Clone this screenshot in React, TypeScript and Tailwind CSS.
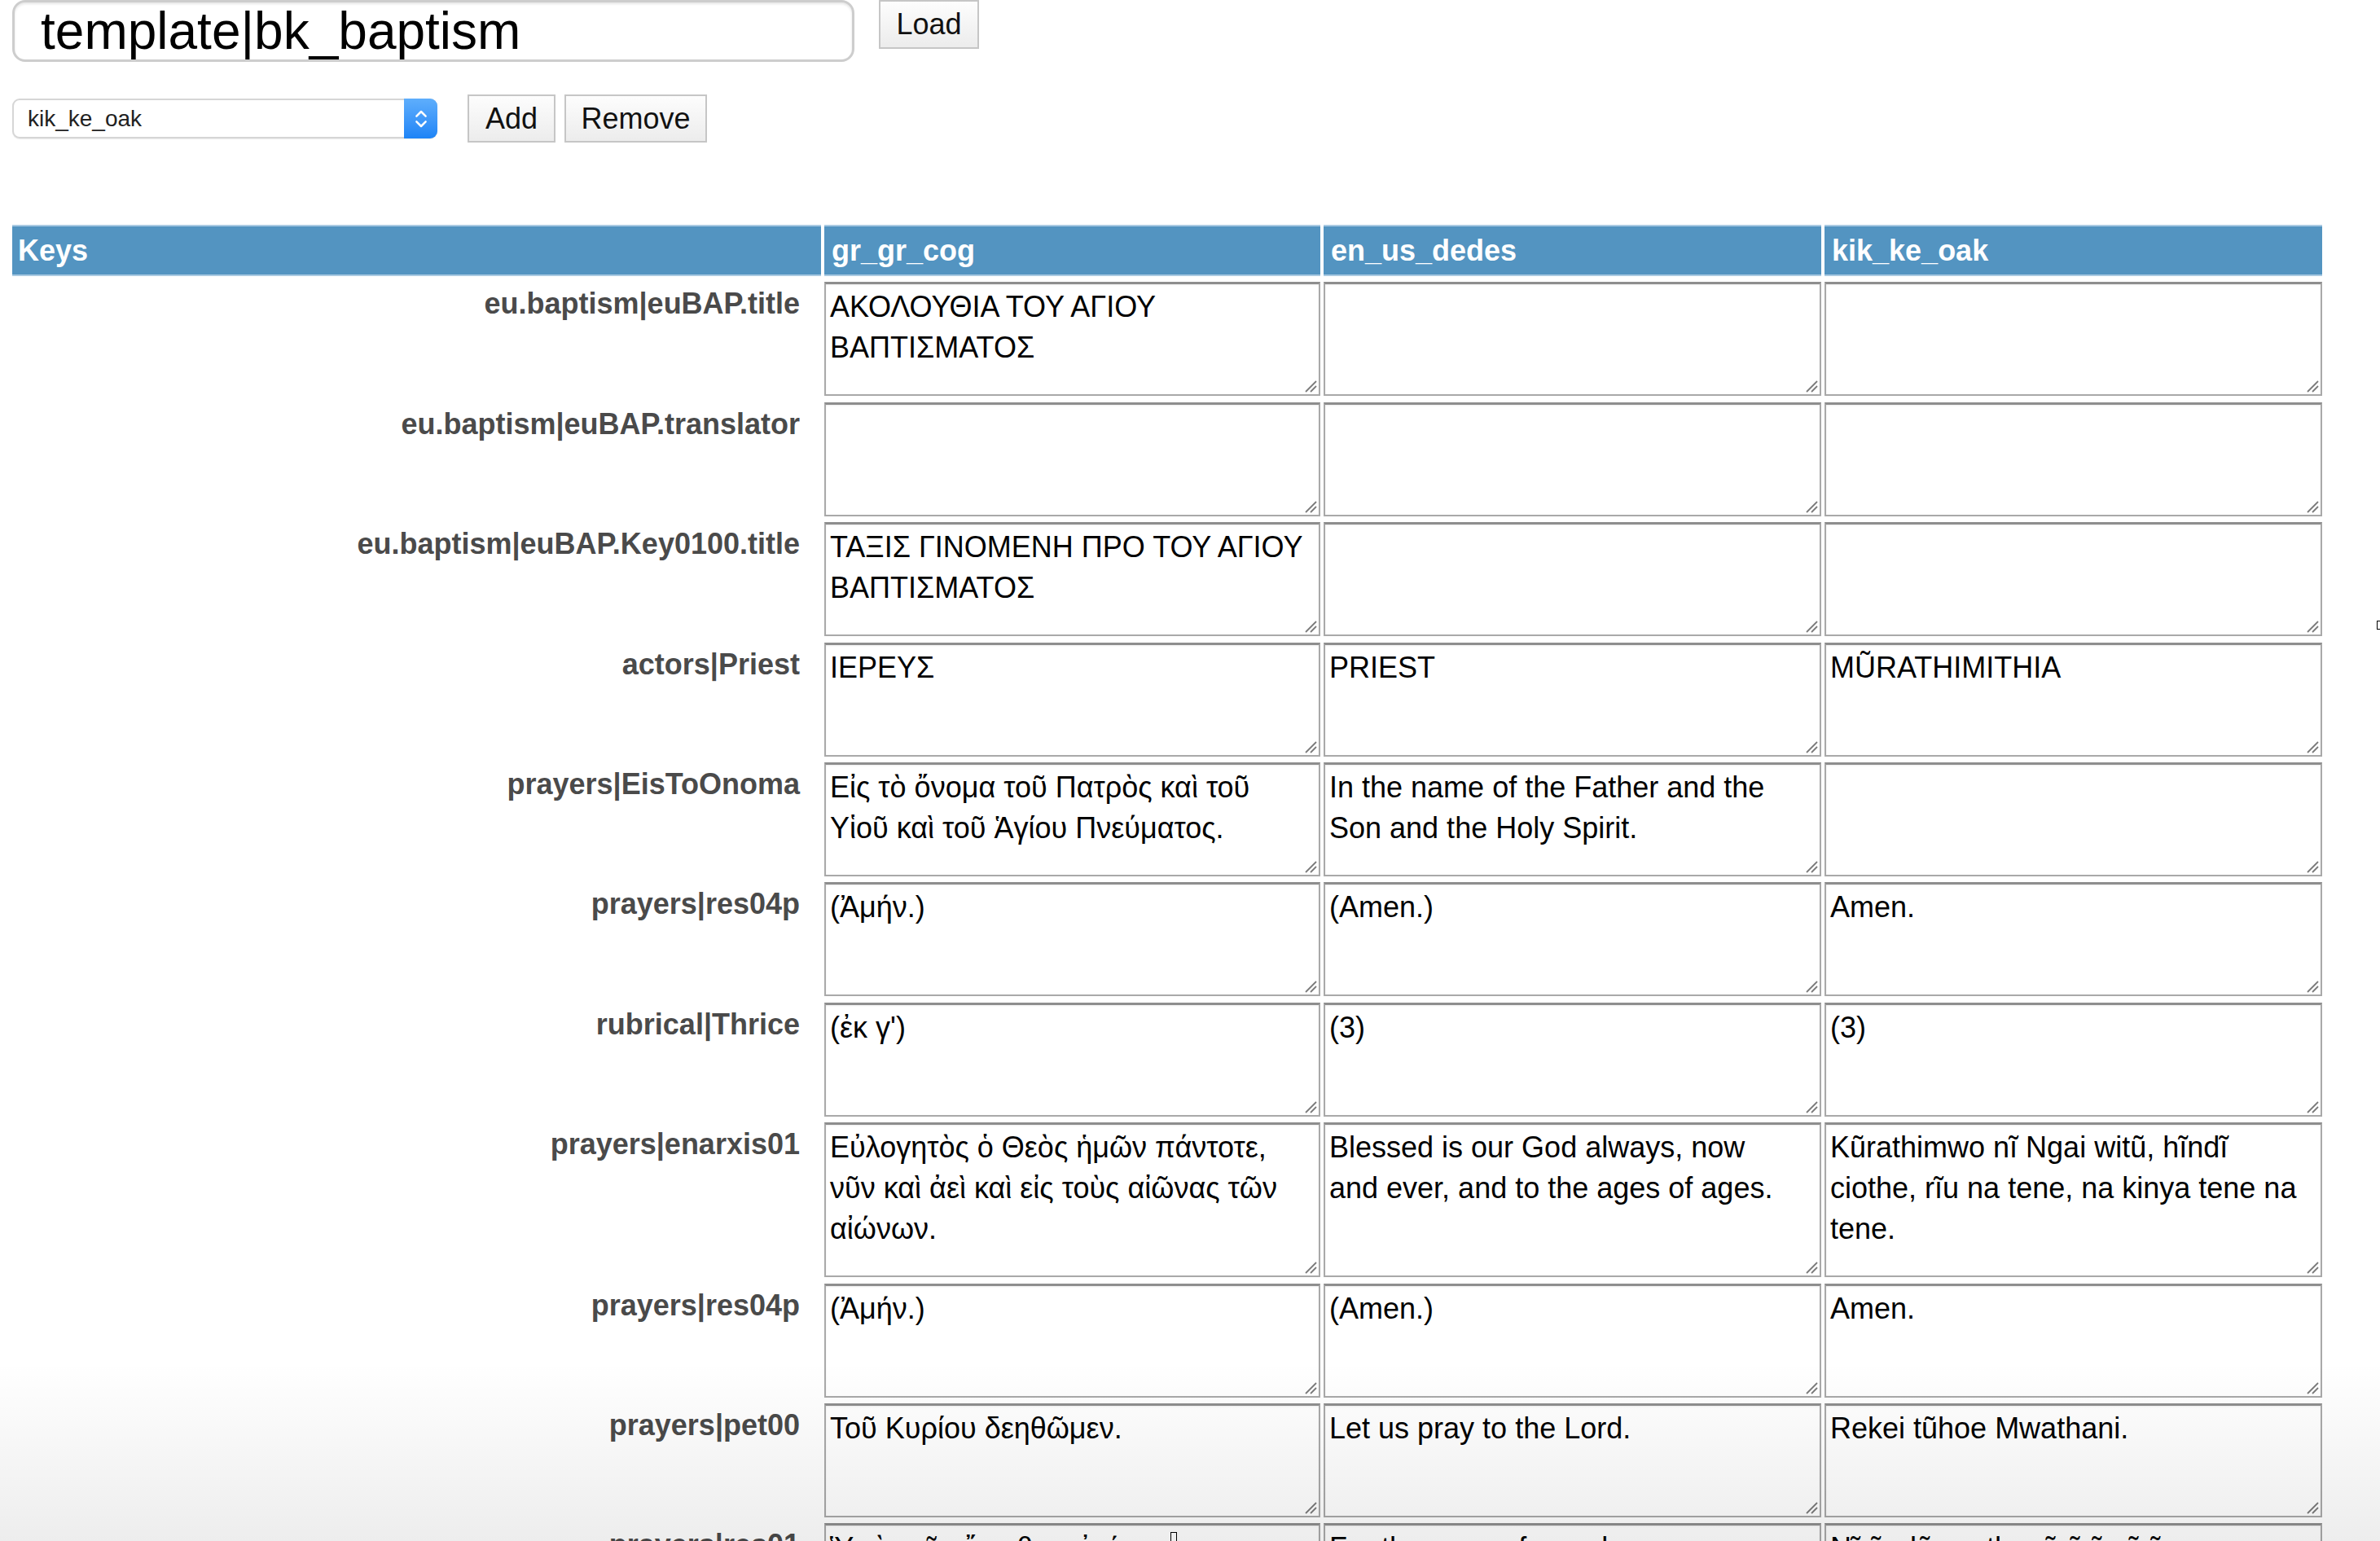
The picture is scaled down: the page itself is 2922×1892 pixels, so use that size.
import React from "react";

type Row = { key: string; gr: string; en: string; kik: string; tall?: boolean };

const rows: Row[] = [
	{ key: "eu.baptism|euBAP.title", gr: "ΑΚΟΛΟΥΘΙΑ ΤΟΥ ΑΓΙΟΥ\nΒΑΠΤΙΣΜΑΤΟΣ", en: "", kik: "" },
	{ key: "eu.baptism|euBAP.translator", gr: "", en: "", kik: "" },
	{ key: "eu.baptism|euBAP.Key0100.title", gr: "ΤΑΞΙΣ ΓΙΝΟΜΕΝΗ ΠΡΟ ΤΟΥ ΑΓΙΟΥ\nΒΑΠΤΙΣΜΑΤΟΣ", en: "", kik: "" },
	{ key: "actors|Priest", gr: "ΙΕΡΕΥΣ", en: "PRIEST", kik: "MŨRATHIMITHIA" },
	{
		key: "prayers|EisToOnoma",
		gr: "Εἰς τὸ ὄνομα τοῦ Πατρὸς καὶ τοῦ\nΥἱοῦ καὶ τοῦ Ἁγίου Πνεύματος.",
		en: "In the name of the Father and the\nSon and the Holy Spirit.",
		kik: "",
	},
	{ key: "prayers|res04p", gr: "(Ἀμήν.)", en: "(Amen.)", kik: "Amen." },
	{ key: "rubrical|Thrice", gr: "(ἐκ γ')", en: "(3)", kik: "(3)" },
	{
		key: "prayers|enarxis01",
		gr: "Εὐλογητὸς ὁ Θεὸς ἡμῶν πάντοτε,\nνῦν καὶ ἀεὶ καὶ εἰς τοὺς αἰῶνας τῶν\nαἰώνων.",
		en: "Blessed is our God always, now\nand ever, and to the ages of ages.",
		kik: "Kũrathimwo nĩ Ngai witũ, hĩndĩ\nciothe, rĩu na tene, na kinya tene na\ntene.",
		tall: true,
	},
	{ key: "prayers|res04p", gr: "(Ἀμήν.)", en: "(Amen.)", kik: "Amen." },
	{ key: "prayers|pet00", gr: "Τοῦ Κυρίου δεηθῶμεν.", en: "Let us pray to the Lord.", kik: "Rekei tũhoe Mwathani." },
	{
		key: "prayers|res01",
		gr: "Ὑπὲρ τῆς ἄνωθεν εἰρήνης",
		en: "For the peace from above",
		kik: "Nĩ ũndũ wa thayũ ũrĩa ũrĩ",
	},
];

const columns = ["gr_gr_cog", "en_us_dedes", "kik_ke_oak"];

function Cell({ value, tall }: { value: string; tall?: boolean }) {
	return (
		<div className="relative">
			<textarea
				readOnly
				wrap="off"
				defaultValue={value}
				className={
					"block w-full resize-none overflow-hidden bg-white text-black text-[36px] leading-[50px] px-[5px] pt-[3px] border-2 border-[#a9a9a9] border-t-[3px] border-t-[#8e8e8e] shadow-[inset_0_1px_2px_rgba(0,0,0,0.08)] outline-none " +
					(tall ? "h-[190px]" : "h-[140px]")
				}
			/>
			<svg
				className="absolute right-[4px] bottom-[4px] w-[16px] h-[16px] pointer-events-none"
				viewBox="0 0 16 16"
			>
				<line x1="15" y1="2" x2="2" y2="15" stroke="#7a7a7a" strokeWidth="1.8" />
				<line x1="15" y1="8" x2="8" y2="15" stroke="#7a7a7a" strokeWidth="1.8" />
			</svg>
		</div>
	);
}

export default function App() {
	return (
		<main className="relative h-[1892px] overflow-hidden bg-white font-['Liberation_Sans',Arial,sans-serif]">
			<div className="px-[15px]">
				{/* template loader */}
				<div className="flex items-start gap-[30px]">
					<input
						readOnly
						defaultValue="template|bk_baptism"
						className="w-[1034px] h-[76px] rounded-[16px] border-[3px] border-[#cdcdcd] bg-white pl-[32px] text-[64px] text-black shadow-[inset_0_2px_3px_rgba(0,0,0,0.1)] outline-none"
					/>
					<button className="w-[123px] h-[60px] border-2 border-[#c6c6c6] bg-linear-to-b from-[#fdfdfd] to-[#ececec] text-[36px] leading-none text-[#111]">
						Load
					</button>
				</div>

				{/* library picker */}
				<div className="mt-[40px] flex items-center">
					<div className="flex w-[522px] h-[49px] rounded-[9px] border-2 border-[#d6d6d6] bg-white shadow-[0_1px_1px_rgba(0,0,0,0.08)]">
						<div className="flex-1 flex items-center pl-[17px] text-[28px] text-[#222]">kik_ke_oak</div>
						<div className="-my-[2px] -mr-[2px] w-[41px] rounded-r-[9px] bg-linear-to-b from-[#5eaefc] to-[#1c84f6] flex items-center justify-center">
							<svg viewBox="0 0 16 28" className="w-[18px] h-[32px]">
								<path d="M3 11 L8 6 L13 11" fill="none" stroke="white" strokeWidth="2.2" strokeLinecap="round" strokeLinejoin="round" />
								<path d="M3 17 L8 22 L13 17" fill="none" stroke="white" strokeWidth="2.2" strokeLinecap="round" strokeLinejoin="round" />
							</svg>
						</div>
					</div>
					<button className="ml-[37px] w-[108px] h-[59px] border-2 border-[#c6c6c6] bg-linear-to-b from-[#fdfdfd] to-[#ececec] text-[36px] leading-none text-[#111]">
						Add
					</button>
					<button className="ml-[11px] w-[175px] h-[59px] border-2 border-[#c6c6c6] bg-linear-to-b from-[#fdfdfd] to-[#ececec] text-[36px] leading-none text-[#111]">
						Remove
					</button>
				</div>

				{/* translation grid */}
				<div className="mt-[101px] grid grid-cols-[993px_609px_611px_611px] gap-x-[4px] gap-y-[7.4px]">
					<div className="h-[63px] flex items-center pl-[7px] bg-[#5394c1] border-y-2 border-[#a9cae2] text-white font-bold text-[36px]">
						Keys
					</div>
					{columns.map((c) => (
						<div
							key={c}
							className="h-[63px] flex items-center pl-[9px] bg-[#5394c1] border-y-2 border-[#a9cae2] text-white font-bold text-[36px]"
						>
							{c}
						</div>
					))}

					{rows.map((r, i) => (
						<React.Fragment key={i}>
							<div className="text-right pr-[26px] pt-[2px] font-bold text-[36px] leading-[50px] text-[#4a4a4a]">{r.key}</div>
							<Cell value={r.gr} tall={r.tall} />
							<Cell value={r.en} tall={r.tall} />
							<Cell value={r.kik} tall={r.tall} />
						</React.Fragment>
					))}
				</div>
			</div>

			{/* stray cursor marks */}
			<span className="absolute right-0 top-[762px] w-[4px] h-[11px] border border-black border-r-0" />
			<span className="absolute left-[1437px] top-[1881px] w-[8px] h-[14px] border border-black bg-white" />

			{/* bottom fade */}
			<div className="pointer-events-none absolute inset-x-0 bottom-0 h-[220px] bg-linear-to-b from-transparent to-[rgba(0,0,0,0.07)]" />
		</main>
	);
}
